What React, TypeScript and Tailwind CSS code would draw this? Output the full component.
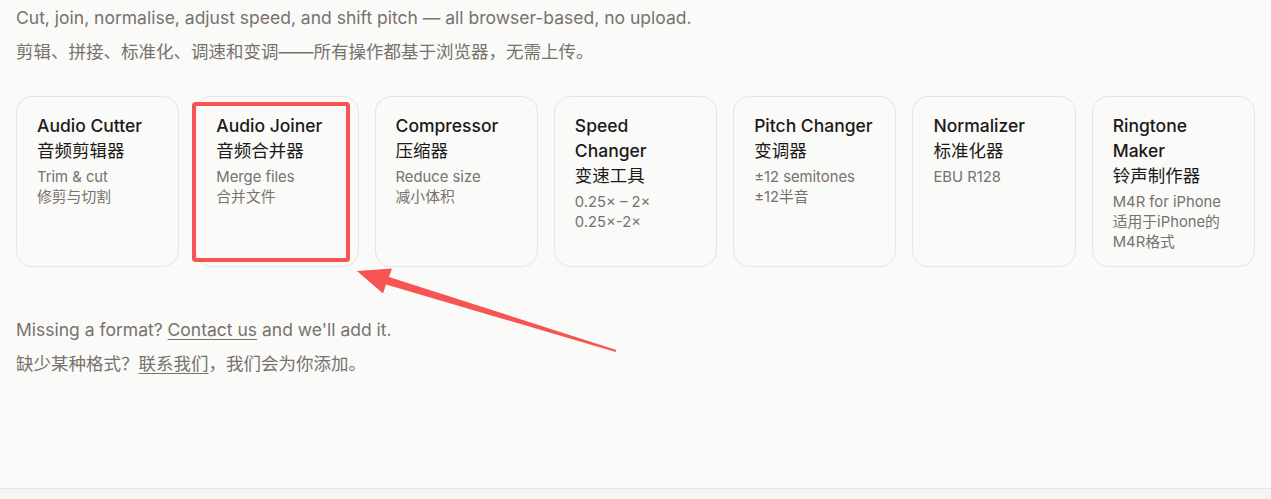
import React from 'react';

interface Tool {
  name: string;
  nameZh: string;
  desc: string;
  descZh: string;
}

const tools: Tool[] = [
  { name: 'Audio Cutter', nameZh: '音频剪辑器', desc: 'Trim & cut', descZh: '修剪与切割' },
  { name: 'Audio Joiner', nameZh: '音频合并器', desc: 'Merge files', descZh: '合并文件' },
  { name: 'Compressor', nameZh: '压缩器', desc: 'Reduce size', descZh: '减小体积' },
  { name: 'Speed Changer', nameZh: '变速工具', desc: '0.25× – 2×', descZh: '0.25×-2×' },
  { name: 'Pitch Changer', nameZh: '变调器', desc: '±12 semitones', descZh: '±12半音' },
  { name: 'Normalizer', nameZh: '标准化器', desc: 'EBU R128', descZh: '' },
  { name: 'Ringtone Maker', nameZh: '铃声制作器', desc: 'M4R for iPhone', descZh: '适用于iPhone的M4R格式' },
];

const font = 'font-["Inter","Noto_Sans_CJK_SC",sans-serif]';

export default function App() {
  return (
    <div className={`relative min-h-[499px] bg-[#fafaf9] ${font}`}>
      <div className="px-4 pt-[5px] pb-[111px]">
        {/* Intro */}
        <p className="text-[17.5px] leading-[26px] text-[#78716c]">
          Cut, join, normalise, adjust speed, and shift pitch — all browser-based, no upload.
        </p>
        <p className="mt-2 text-[17.5px] leading-[26px] text-[#78716c]">
          剪辑、拼接、标准化、调速和变调——所有操作都基于浏览器，无需上传。
        </p>

        {/* Tool cards */}
        <div className="mt-[31px] grid grid-cols-7 gap-4">
          {tools.map(tool => (
            <a
              key={tool.name}
              href="#"
              className="block h-[171px] rounded-2xl border border-[#e7e5e4] bg-[#fafaf9] px-5 py-4"
            >
              <div className="text-[17.5px] font-medium leading-[25px] text-[#1c1917]">
                {tool.name}
                <br />
                <span className="font-normal">{tool.nameZh}</span>
              </div>
              <div className="mt-1 text-[14.8px] leading-5 text-[#78716c]">
                <div>{tool.desc}</div>
                {tool.descZh && <div>{tool.descZh}</div>}
              </div>
            </a>
          ))}
        </div>

        {/* Missing format */}
        <p className="mt-[50px] text-[17.5px] leading-[26px] text-[#78716c]">
          Missing a format?{' '}
          <a href="#" className="underline underline-offset-[3px]">Contact us</a> and we'll add it.
        </p>
        <p className="mt-2 text-[17.5px] leading-[26px] text-[#78716c]">
          缺少某种格式？<a href="#" className="underline underline-offset-[3px]">联系我们</a>，我们会为你添加。
        </p>
      </div>

      <footer className="h-[11px] border-t border-[#e7e5e4] bg-[#f5f5f4]" />

      {/* Annotation overlay */}
      <svg
        className="pointer-events-none absolute left-0 top-0"
        width="1271"
        height="499"
        viewBox="0 0 1271 499"
      >
        <rect x="194" y="104" width="154" height="156" rx="1.5" fill="none" stroke="#f75454" strokeWidth="4" />
        <polygon
          points="357,271 392,268.5 389,277 616.3,350 615.7,352 386,284.5 383,293.5"
          fill="#f75454"
        />
      </svg>
    </div>
  );
}
